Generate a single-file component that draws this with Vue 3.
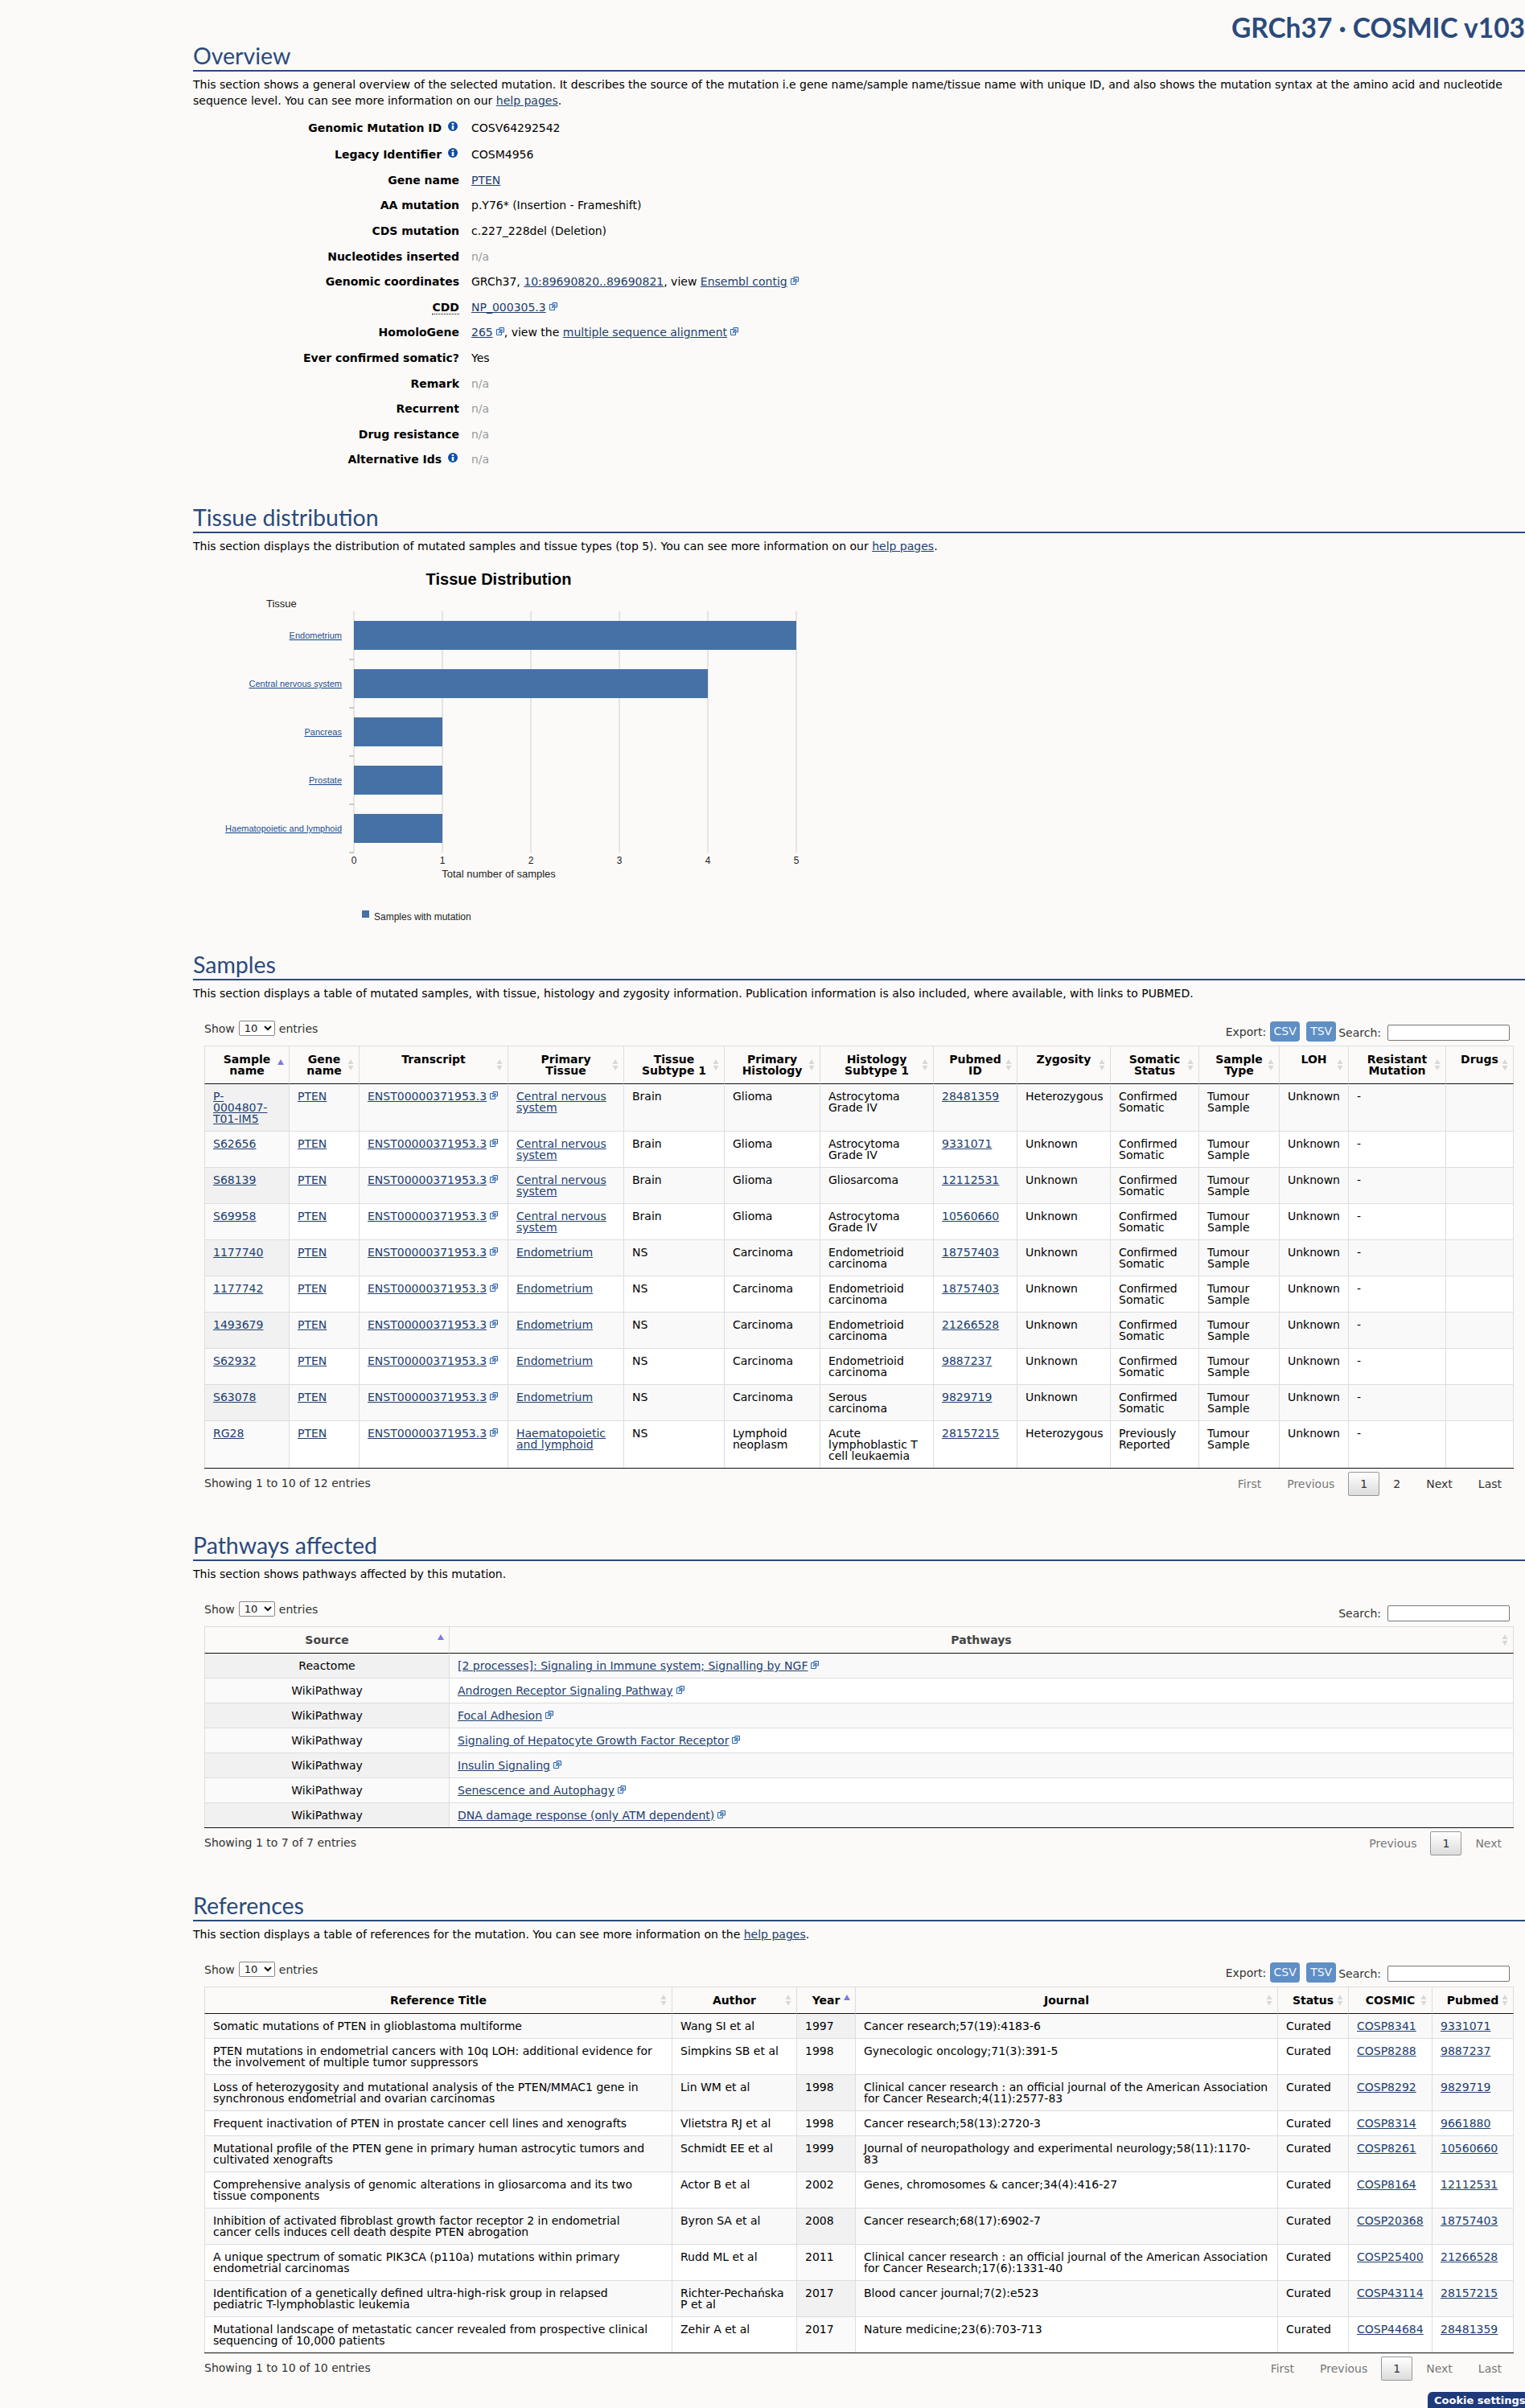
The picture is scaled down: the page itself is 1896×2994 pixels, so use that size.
<script setup>
const sCols = [105,87,185,144,125,119,141,104,116,110,100,86,121,85]
const sHead = [
  ['Sample','name'],['Gene','name'],['Transcript'],['Primary','Tissue'],['Tissue','Subtype 1'],['Primary','Histology'],['Histology','Subtype 1'],['Pubmed','ID'],['Zygosity'],['Somatic','Status'],['Sample','Type'],['LOH'],['Resistant','Mutation'],['Drugs']
]
const cns = 'Central nervous system'
const endo = 'Endometrium'
const samples = [
  ['P-0004807-T01-IM5',cns,'Brain','Glioma','Astrocytoma Grade IV','28481359','Heterozygous','Confirmed Somatic'],
  ['S62656',cns,'Brain','Glioma','Astrocytoma Grade IV','9331071','Unknown','Confirmed Somatic'],
  ['S68139',cns,'Brain','Glioma','Gliosarcoma','12112531','Unknown','Confirmed Somatic'],
  ['S69958',cns,'Brain','Glioma','Astrocytoma Grade IV','10560660','Unknown','Confirmed Somatic'],
  ['1177740',endo,'NS','Carcinoma','Endometrioid carcinoma','18757403','Unknown','Confirmed Somatic'],
  ['1177742',endo,'NS','Carcinoma','Endometrioid carcinoma','18757403','Unknown','Confirmed Somatic'],
  ['1493679',endo,'NS','Carcinoma','Endometrioid carcinoma','21266528','Unknown','Confirmed Somatic'],
  ['S62932',endo,'NS','Carcinoma','Endometrioid carcinoma','9887237','Unknown','Confirmed Somatic'],
  ['S63078',endo,'NS','Carcinoma','Serous carcinoma','9829719','Unknown','Confirmed Somatic'],
  ['RG28','Haematopoietic and lymphoid','NS','Lymphoid neoplasm','Acute lymphoblastic T cell leukaemia','28157215','Heterozygous','Previously Reported'],
]
const pathways = [
  ['Reactome','[2 processes]: Signaling in Immune system; Signalling by NGF'],
  ['WikiPathway','Androgen Receptor Signaling Pathway'],
  ['WikiPathway','Focal Adhesion'],
  ['WikiPathway','Signaling of Hepatocyte Growth Factor Receptor'],
  ['WikiPathway','Insulin Signaling'],
  ['WikiPathway','Senescence and Autophagy'],
  ['WikiPathway','DNA damage response (only ATM dependent)'],
]
const rCols = [581,155,73,525,88,104,102]
const refs = [
  ['Somatic mutations of PTEN in glioblastoma multiforme','Wang SI et al','1997','Cancer research;57(19):4183-6','COSP8341','9331071'],
  ['PTEN mutations in endometrial cancers with 10q LOH: additional evidence for the involvement of multiple tumor suppressors','Simpkins SB et al','1998','Gynecologic oncology;71(3):391-5','COSP8288','9887237'],
  ['Loss of heterozygosity and mutational analysis of the PTEN/MMAC1 gene in synchronous endometrial and ovarian carcinomas','Lin WM et al','1998','Clinical cancer research : an official journal of the American Association\nfor Cancer Research;4(11):2577-83','COSP8292','9829719'],
  ['Frequent inactivation of PTEN in prostate cancer cell lines and xenografts','Vlietstra RJ et al','1998','Cancer research;58(13):2720-3','COSP8314','9661880'],
  ['Mutational profile of the PTEN gene in primary human astrocytic tumors and cultivated xenografts','Schmidt EE et al','1999','Journal of neuropathology and experimental neurology;58(11):1170-\n83','COSP8261','10560660'],
  ['Comprehensive analysis of genomic alterations in gliosarcoma and its two tissue components','Actor B et al','2002','Genes, chromosomes & cancer;34(4):416-27','COSP8164','12112531'],
  ['Inhibition of activated fibroblast growth factor receptor 2 in endometrial cancer cells induces cell death despite PTEN abrogation','Byron SA et al','2008','Cancer research;68(17):6902-7','COSP20368','18757403'],
  ['A unique spectrum of somatic PIK3CA (p110a) mutations within primary endometrial carcinomas','Rudd ML et al','2011','Clinical cancer research : an official journal of the American Association\nfor Cancer Research;17(6):1331-40','COSP25400','21266528'],
  ['Identification of a genetically defined ultra-high-risk group in relapsed pediatric T-lymphoblastic leukemia','Richter-Pechańska P et al','2017','Blood cancer journal;7(2):e523','COSP43114','28157215'],
  ['Mutational landscape of metastatic cancer revealed from prospective clinical sequencing of 10,000 patients','Zehir A et al','2017','Nature medicine;23(6):703-713','COSP44684','28481359'],
]
const bars = [
  ['Endometrium',5],['Central nervous system',4],['Pancreas',1],['Prostate',1],['Haematopoietic and lymphoid',1]
]
const ticks = [0,1,2,3,4,5]
</script>

<template>
  <div class="page">
    <div class="topbar"><div class="title">GRCh37 · COSMIC v103</div></div>

    <section>
      <h2>Overview</h2>
      <p class="desc">This section shows a general overview of the selected mutation. It describes the source of the mutation i.e gene name/sample name/tissue name with unique ID, and also shows the mutation syntax at the amino acid and nucleotide sequence level. You can see more information on our <a>help pages</a>.</p>
      <dl class="facts">
        <div class="fact tall"><dt>Genomic Mutation ID <svg class="info" viewBox="0 0 12 12"><circle cx="6" cy="6" r="6" fill="#0d4ea6"/><rect x="4.7" y="2" width="2.6" height="2" fill="#fff"/><rect x="4.7" y="5" width="2.6" height="5" fill="#fff"/></svg></dt><dd>COSV64292542</dd></div>
        <div class="fact tall"><dt>Legacy Identifier <svg class="info" viewBox="0 0 12 12"><circle cx="6" cy="6" r="6" fill="#0d4ea6"/><rect x="4.7" y="2" width="2.6" height="2" fill="#fff"/><rect x="4.7" y="5" width="2.6" height="5" fill="#fff"/></svg></dt><dd>COSM4956</dd></div>
        <div class="fact"><dt>Gene name</dt><dd><a>PTEN</a></dd></div>
        <div class="fact"><dt>AA mutation</dt><dd>p.Y76* (Insertion - Frameshift)</dd></div>
        <div class="fact"><dt>CDS mutation</dt><dd>c.227_228del (Deletion)</dd></div>
        <div class="fact"><dt>Nucleotides inserted</dt><dd class="na">n/a</dd></div>
        <div class="fact"><dt>Genomic coordinates</dt><dd>GRCh37, <a>10:89690820..89690821</a>, view <a>Ensembl contig</a><svg class="ext" viewBox="0 0 10 10"><path d="M.5 2.5h6v7h-6z" fill="#fff" stroke="#2b62a8"/><path d="M4 .5h5.5v5.5H4z" fill="#dbe8f6" stroke="#2b62a8"/><path d="M2.5 7.5 7 3M5 3h2v2" fill="none" stroke="#2b62a8"/></svg></dd></div>
        <div class="fact"><dt><abbr>CDD</abbr></dt><dd><a>NP_000305.3</a><svg class="ext" viewBox="0 0 10 10"><path d="M.5 2.5h6v7h-6z" fill="#fff" stroke="#2b62a8"/><path d="M4 .5h5.5v5.5H4z" fill="#dbe8f6" stroke="#2b62a8"/><path d="M2.5 7.5 7 3M5 3h2v2" fill="none" stroke="#2b62a8"/></svg></dd></div>
        <div class="fact"><dt>HomoloGene</dt><dd><a>265</a><svg class="ext" viewBox="0 0 10 10"><path d="M.5 2.5h6v7h-6z" fill="#fff" stroke="#2b62a8"/><path d="M4 .5h5.5v5.5H4z" fill="#dbe8f6" stroke="#2b62a8"/><path d="M2.5 7.5 7 3M5 3h2v2" fill="none" stroke="#2b62a8"/></svg>, view the <a>multiple sequence alignment</a><svg class="ext" viewBox="0 0 10 10"><path d="M.5 2.5h6v7h-6z" fill="#fff" stroke="#2b62a8"/><path d="M4 .5h5.5v5.5H4z" fill="#dbe8f6" stroke="#2b62a8"/><path d="M2.5 7.5 7 3M5 3h2v2" fill="none" stroke="#2b62a8"/></svg></dd></div>
        <div class="fact"><dt>Ever confirmed somatic?</dt><dd>Yes</dd></div>
        <div class="fact"><dt>Remark</dt><dd class="na">n/a</dd></div>
        <div class="fact"><dt>Recurrent</dt><dd class="na">n/a</dd></div>
        <div class="fact"><dt>Drug resistance</dt><dd class="na">n/a</dd></div>
        <div class="fact"><dt>Alternative Ids <svg class="info" viewBox="0 0 12 12"><circle cx="6" cy="6" r="6" fill="#0d4ea6"/><rect x="4.7" y="2" width="2.6" height="2" fill="#fff"/><rect x="4.7" y="5" width="2.6" height="5" fill="#fff"/></svg></dt><dd class="na">n/a</dd></div>
      </dl>
    </section>

    <section class="s-tissue">
      <h2>Tissue distribution</h2>
      <p class="desc">This section displays the distribution of mutated samples and tissue types (top 5). You can see more information on our <a>help pages</a>.</p>
      <svg class="chart" width="760" height="470" viewBox="240 700 760 470">
        <text x="620" y="727" text-anchor="middle" class="c-title">Tissue Distribution</text>
        <text x="331" y="755" class="c-lab">Tissue</text>
        <line v-for="t in ticks" :key="t" :x1="440 + t * 110" :x2="440 + t * 110" y1="760" y2="1060" stroke="#ddd" stroke-width="1.5"/>
        <g v-for="(b, i) in bars" :key="b[0]">
          <rect x="440" :y="772 + i * 60" :width="b[1] * 110" height="36" fill="#4571a6"/>
          <line x1="434" x2="440" :y1="820 + i * 60" :y2="820 + i * 60" stroke="#bbb" stroke-width="1.5"/>
          <text x="425" :y="794 + i * 60" text-anchor="end" class="c-link">{{ b[0] }}</text>
        </g>
        <text v-for="t in ticks" :key="'l' + t" :x="440 + t * 110" y="1074" text-anchor="middle" class="c-tick">{{ t }}</text>
        <text x="620" y="1091" text-anchor="middle" class="c-lab">Total number of samples</text>
        <rect x="450" y="1132" width="9" height="9" fill="#4571a6"/>
        <text x="465" y="1144" class="c-tick">Samples with mutation</text>
      </svg>
    </section>

    <section class="s-samples">
      <h2>Samples</h2>
      <p class="desc">This section displays a table of mutated samples, with tissue, histology and zygosity information. Publication information is also included, where available, with links to PUBMED.</p>
      <div class="tools">
        <label class="len">Show <select><option>10</option></select> entries</label>
        <div class="tools-r">
          <span class="exp">Export:</span><button class="btn">CSV</button><button class="btn">TSV</button>
          <label class="search">Search: <input type="text"></label>
        </div>
      </div>
      <table>
        <colgroup><col v-for="(w, i) in sCols" :key="i" :style="{ width: w + 'px' }"></colgroup>
        <thead>
          <tr>
            <th v-for="(h, i) in sHead" :key="i">
              <template v-for="(l, j) in h" :key="j"><br v-if="j">{{ l }}</template>
              <svg v-if="i === 0" class="sort up" viewBox="0 0 8 7"><path d="M4 0l4 7H0z" fill="#7b7be0"/></svg>
              <svg v-else class="sort" viewBox="0 0 8 14"><path d="M4 0l3.5 6H.5zM4 14 .5 8h7z" fill="#d8d8d8"/></svg>
            </th>
          </tr>
        </thead>
        <tbody>
          <tr v-for="r in samples" :key="r[0]">
            <td class="sorted name"><a>{{ r[0] }}</a></td>
            <td><a>PTEN</a></td>
            <td class="nw"><a>ENST00000371953.3</a><svg class="ext" viewBox="0 0 10 10"><path d="M.5 2.5h6v7h-6z" fill="#fff" stroke="#2b62a8"/><path d="M4 .5h5.5v5.5H4z" fill="#dbe8f6" stroke="#2b62a8"/><path d="M2.5 7.5 7 3M5 3h2v2" fill="none" stroke="#2b62a8"/></svg></td>
            <td><a>{{ r[1] }}</a></td>
            <td>{{ r[2] }}</td>
            <td>{{ r[3] }}</td>
            <td>{{ r[4] }}</td>
            <td><a>{{ r[5] }}</a></td>
            <td class="nw">{{ r[6] }}</td>
            <td>{{ r[7] }}</td>
            <td>Tumour Sample</td>
            <td>Unknown</td>
            <td>-</td>
            <td></td>
          </tr>
        </tbody>
      </table>
      <div class="foot">
        <div class="info-txt">Showing 1 to 10 of 12 entries</div>
        <div class="pager"><span class="dis">First</span><span class="dis">Previous</span><span class="cur">1</span><span>2</span><span>Next</span><span>Last</span></div>
      </div>
    </section>

    <section class="s-path">
      <h2>Pathways affected</h2>
      <p class="desc">This section shows pathways affected by this mutation.</p>
      <div class="tools">
        <label class="len">Show <select><option>10</option></select> entries</label>
        <div class="tools-r">
          <label class="search">Search: <input type="text"></label>
        </div>
      </div>
      <table class="pw">
        <colgroup><col style="width:304px"><col></colgroup>
        <thead>
          <tr>
            <th>Source<svg class="sort up" viewBox="0 0 8 7"><path d="M4 0l4 7H0z" fill="#7b7be0"/></svg></th>
            <th>Pathways<svg class="sort" viewBox="0 0 8 14"><path d="M4 0l3.5 6H.5zM4 14 .5 8h7z" fill="#d8d8d8"/></svg></th>
          </tr>
        </thead>
        <tbody>
          <tr v-for="(r, i) in pathways" :key="i">
            <td class="sorted ctr">{{ r[0] }}</td>
            <td><a>{{ r[1] }}</a><svg class="ext" viewBox="0 0 10 10"><path d="M.5 2.5h6v7h-6z" fill="#fff" stroke="#2b62a8"/><path d="M4 .5h5.5v5.5H4z" fill="#dbe8f6" stroke="#2b62a8"/><path d="M2.5 7.5 7 3M5 3h2v2" fill="none" stroke="#2b62a8"/></svg></td>
          </tr>
        </tbody>
      </table>
      <div class="foot">
        <div class="info-txt">Showing 1 to 7 of 7 entries</div>
        <div class="pager"><span class="dis">Previous</span><span class="cur">1</span><span class="dis">Next</span></div>
      </div>
    </section>

    <section class="s-refs">
      <h2>References</h2>
      <p class="desc">This section displays a table of references for the mutation. You can see more information on the <a>help pages</a>.</p>
      <div class="tools">
        <label class="len">Show <select><option>10</option></select> entries</label>
        <div class="tools-r">
          <span class="exp">Export:</span><button class="btn">CSV</button><button class="btn">TSV</button>
          <label class="search">Search: <input type="text"></label>
        </div>
      </div>
      <table>
        <colgroup><col v-for="(w, i) in rCols" :key="i" :style="{ width: w + 'px' }"></colgroup>
        <thead>
          <tr>
            <th v-for="(h, i) in ['Reference Title','Author','Year','Journal','Status','COSMIC','Pubmed']" :key="h">{{ h }}
              <svg v-if="i === 2" class="sort up" viewBox="0 0 8 7"><path d="M4 0l4 7H0z" fill="#7b7be0"/></svg>
              <svg v-else class="sort" viewBox="0 0 8 14"><path d="M4 0l3.5 6H.5zM4 14 .5 8h7z" fill="#d8d8d8"/></svg>
            </th>
          </tr>
        </thead>
        <tbody>
          <tr v-for="r in refs" :key="r[4]">
            <td class="rtitle">{{ r[0] }}</td>
            <td>{{ r[1] }}</td>
            <td class="sorted">{{ r[2] }}</td>
            <td class="jrnl">{{ r[3] }}</td>
            <td>Curated</td>
            <td><a>{{ r[4] }}</a></td>
            <td><a>{{ r[5] }}</a></td>
          </tr>
        </tbody>
      </table>
      <div class="foot">
        <div class="info-txt">Showing 1 to 10 of 10 entries</div>
        <div class="pager"><span class="dis">First</span><span class="dis">Previous</span><span class="cur">1</span><span class="dis">Next</span><span class="dis">Last</span></div>
      </div>
    </section>

    <div class="cookie">Cookie settings</div>
  </div>
</template>

<style>
html, body { margin: 0; background: #fbfaf8; }
</style>

<style scoped>
.page {
  position: relative;
  width: 1896px;
  height: 2994px;
  overflow: hidden;
  box-sizing: border-box;
  padding-left: 240px;
  background: #fbfaf8;
  color: #000;
  font: 14px/14px "DejaVu Sans", Verdana, sans-serif;
}
.topbar { height: 51px; display: flex; justify-content: flex-end; align-items: flex-end; }
.title {
  font: 700 33.5px/34px Lato, "Open Sans", sans-serif;
  color: #2b4a7c;
  white-space: nowrap;
}
h2 {
  margin: 0;
  height: 36px;
  font: 400 28.5px/36px Lato, "Open Sans", sans-serif;
  color: #2b4a7c;
  border-bottom: 2px solid #2b4a7c;
}
.desc { margin: 6px 0 0; line-height: 20px; }
a { color: #22406f; text-decoration: underline; }
.facts { margin: 7px 0 0; }
.fact { display: flex; align-items: center; min-height: 31.6px; }
.fact.tall { min-height: 33px; }
.fact dt { width: 331px; text-align: right; font-weight: 700; white-space: nowrap; }
.fact dd { margin: 0 0 0 15px; }
.na { color: #999; }
abbr { border-bottom: 1px dotted #000; }
.info { width: 12px; height: 12px; margin: -1px 2px 0 3px; vertical-align: top; }
.ext { width: 10px; height: 10px; margin: 1px 0 0 4px; vertical-align: top; }
.s-tissue { margin-top: 38px; }
.chart { display: block; margin-top: 11px; }
.chart text { font-family: "Liberation Sans", Arial, sans-serif; }
.c-title { font-size: 20px; font-weight: 700; fill: #000; }
.c-lab { font-size: 13px; fill: #222; }
.c-tick { font-size: 12px; fill: #222; }
.c-link { font-size: 11px; fill: #1c4f90; text-decoration: underline; }
.s-samples { margin-top: 11px; }
.tools { margin-top: 20px; height: 35px; box-sizing: border-box; padding: 4px 19px 0 14px; display: flex; justify-content: space-between; align-items: flex-start; color: #333; }
.len { display: flex; align-items: center; gap: 5px; height: 19px; }
.len select {
  width: 45px; height: 19px; padding: 0 0 0 2px; margin: 0;
  font: 13px "DejaVu Sans", sans-serif;
  background: #fff; border: 1px solid #888; border-radius: 2px; color: #111;
}
.tools-r { display: flex; align-items: flex-start; margin-top: 1px; }
.exp { margin-right: 5px; line-height: 27px; }
.btn {
  width: 37px; height: 25px; margin: 0 8px 0 0; padding: 0;
  background: #5f8fc4; color: #f4f8ff; border: 0; border-radius: 4px;
  font: 14px/25px "DejaVu Sans", sans-serif;
}
.btn + .btn { margin-right: 3px; }
.search { display: flex; align-items: center; gap: 8px; height: 28px; }
.search input { width: 152px; height: 20px; box-sizing: border-box; margin: 0; padding: 0; background: #fff; border: 1px solid #777; border-radius: 2px; }
table {
  width: 1628px;
  margin-left: 14px;
  table-layout: fixed;
  border-collapse: separate;
  border-spacing: 0;
  background: #fff;
  border-bottom: 1px solid #111;
}
th {
  position: relative;
  padding: 9px 10px;
  font-weight: 700;
  background: #fbfaf8;
  border-top: 1px solid #ddd;
  border-left: 1px solid #ddd;
  border-bottom: 1px solid #111;
  text-align: center;
  vertical-align: top;
}
th:last-child { border-right: 1px solid #ddd; }
td {
  padding: 8px 10px;
  border-left: 1px solid #ddd;
  border-top: 1px solid #ddd;
  vertical-align: top;
  word-wrap: break-word;
}
td:last-child { border-right: 1px solid #ddd; }
tbody tr:first-child td { border-top: 0; }
tbody tr:nth-child(odd) td { background: #f9f9f9; }
tbody tr td.sorted { background: #fafafa; }
tbody tr:nth-child(odd) td.sorted { background: #f1f1f1; }
td.nw { white-space: nowrap; padding-right: 0; }
td.ctr { text-align: center; }
td.name { padding-right: 14px; }
td.rtitle { padding-right: 18px; }
td.jrnl { white-space: pre-line; padding-right: 0; }
.pw th { color: #444; }
.sort { position: absolute; right: 6px; top: 50%; width: 8px; height: 14px; margin-top: -7px; }
.sort.up { height: 7px; margin-top: -7px; }
.foot { display: flex; justify-content: space-between; align-items: flex-start; margin-left: 14px; width: 1628px; color: #333; }
.info-txt { margin-top: 11px; }
.pager { display: flex; margin-top: 4px; }
.pager span { padding: 7px 14px; margin-left: 2px; border: 1px solid transparent; color: #333; border-radius: 2px; }
.pager .dis { color: #777; }
.pager .cur { border-color: #979797; background: linear-gradient(to bottom, #fff 0%, #dcdcdc 100%); }
.s-path { margin-top: 43px; }
.s-refs { margin-top: 44px; }
.cookie {
  position: absolute;
  left: 1775px; right: 0; bottom: 0;
  height: 20px;
  background: #1f3a7a;
  color: #fff;
  font-weight: 700;
  font-size: 13px;
  line-height: 22px;
  padding-left: 8px;
  border-top-left-radius: 6px;
  white-space: nowrap;
  overflow: hidden;
}
</style>
